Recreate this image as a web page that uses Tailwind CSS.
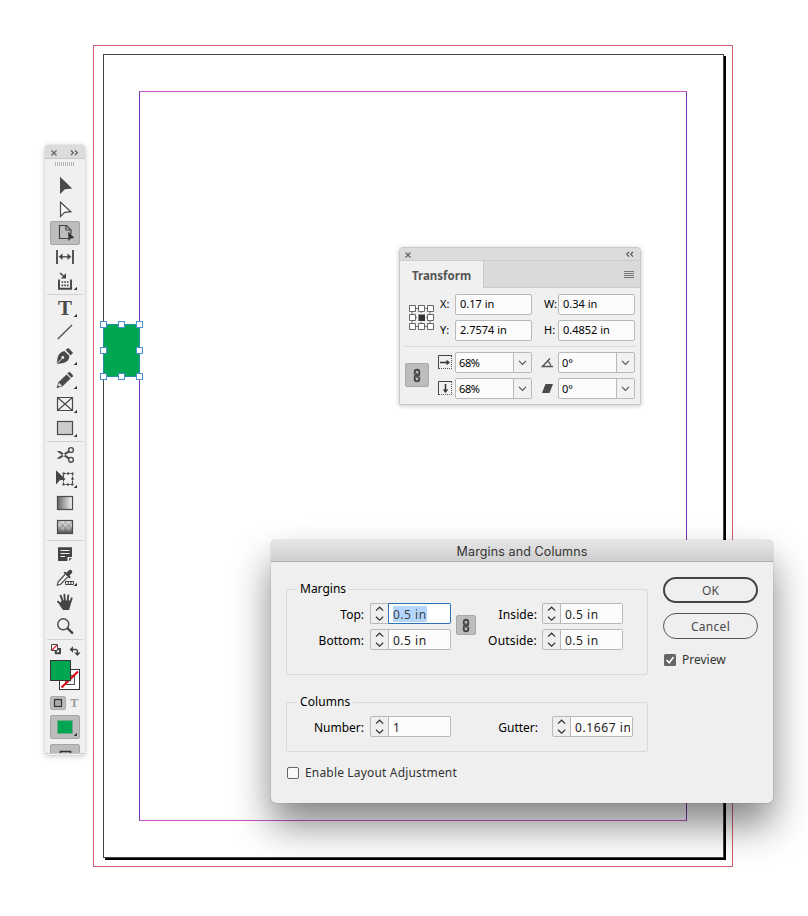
<!DOCTYPE html>
<html lang="en">
  <head>
    <meta charset="UTF-8" />
    <meta name="viewport" content="width=device-width, initial-scale=1.0" />
    <title>Margins and Columns</title>
    <script src="https://cdn.jsdelivr.net/npm/@tailwindcss/browser@4"></script>
  </head>
  <body class="relative w-[808px] h-[916px] overflow-hidden bg-white font-['Noto_Sans',sans-serif] text-black">
    <!-- Icons used more than once -->
    <svg class="hidden">
      <symbol id="corner" viewBox="0 0 4 4"><path d="M4 .7V4H.7z" fill="#333" /></symbol>
      <symbol id="chain" viewBox="0 0 10 16">
        <g fill="none" stroke="#444" stroke-width="2">
          <path d="M2.600 6.800V4.200a2.400 2.400 0 0 1 4.800 0v2a2.200 2.200 0 0 1-2.200 2.300v2" />
          <path d="M7.400 9.200v2.600a2.400 2.400 0 0 1-4.800 0v-2a2.200 2.200 0 0 1 2.200-2.300v-2" />
        </g>
      </symbol>
      <symbol id="steps" viewBox="0 0 17 19">
        <path d="M5 6.600 8.600 3.200l3.600 3.400M5 12.800l3.600 3.400 3.600-3.400" fill="none" stroke="#333" stroke-width="1.200" />
      </symbol>
      <symbol id="down" viewBox="0 0 17 19">
        <path d="M5 7.800l3.500 3.500L12 7.800" fill="none" stroke="#555" stroke-width="1.200" />
      </symbol>
    </svg>

    <!-- Document page: bleed, trim, margins -->
    <div class="absolute left-[93px] top-[45px] w-[640px] h-[822px] border border-[#d0606f] pl-[9px] pt-[8px]">
      <div class="w-[621px] h-[804px] border border-[#444] bg-white shadow-[2px_2px_0_#000] pl-[35px] pt-[36px]">
        <div class="w-[548px] h-[730px] border border-x-[#7f35b5] border-y-[#c455c9]"></div>
      </div>
    </div>

    <!-- Selected object -->
    <svg class="absolute left-[99px] top-[320px]" width="45" height="61" viewBox="0 0 45 61">
      <rect x="4.500" y="4.500" width="36" height="52" fill="#00a651" stroke="#2a8fa8" />
      <g fill="#fff" stroke="#4a90d0">
        <rect x="1.500" y="1.500" width="6" height="6" /><rect x="19.500" y="1.500" width="6" height="6" /><rect x="37.500" y="1.500" width="6" height="6" />
        <rect x="1.500" y="27.500" width="6" height="6" /><rect x="37.500" y="27.500" width="6" height="6" />
        <rect x="1.500" y="53.500" width="6" height="6" /><rect x="19.500" y="53.500" width="6" height="6" /><rect x="37.500" y="53.500" width="6" height="6" />
      </g>
    </svg>

    <!-- Tools panel -->
    <div class="absolute left-[45px] top-[145px] w-[40px] h-[610px] flex flex-col overflow-hidden rounded-t-[4px] bg-[#f0f0f0] shadow-[0_0_1px_rgba(0,0,0,0.3),0_1px_6px_rgba(0,0,0,0.22)]">
      <svg class="shrink-0" width="40" height="29" viewBox="0 0 40 29">
        <rect width="40" height="14" fill="#dcdcdc" />
        <path d="M0 13.500h40" stroke="#c8c8c8" />
        <path d="m6.500 5.500 5 5m0-5-5 5" stroke="#666" stroke-width="1.300" />
        <path d="m26 5.500 2.300 2.300L26 10.100m4-4.600 2.300 2.300L30 10.100" fill="none" stroke="#555" stroke-width="1.200" />
        <path d="M10.500 17v4m2-4v4m2-4v4m2-4v4m2-4v4m2-4v4m2-4v4m2-4v4m2-4v4m2-4v4" stroke="#b4b4b4" />
      </svg>
      <!-- selection -->
      <svg class="shrink-0" width="40" height="24"><path d="M15 2.700V20l5-4.700 7.200-.8z" fill="#4a4a4a" /></svg>
      <!-- direct selection -->
      <svg class="shrink-0" width="40" height="24"><path d="M15.500 4.200v14.300l4.100-4.200 6.300-.6z" fill="#fafafa" stroke="#4a4a4a" stroke-width="1.200" /></svg>
      <!-- page -->
      <svg class="shrink-0 overflow-visible" width="40" height="24">
        <rect x="5.500" y="-.5" width="29" height="23" rx="1.500" fill="#bdbdbd" stroke="#a5a5a5" />
        <path d="M23 16.500h-8.500v-13h7l4.500 4.500v4M21 3.500V8h5" fill="none" stroke="#444" stroke-width="1.200" />
        <path d="M23.300 9.500v9.700l2.500-2.700 3.500-.5z" fill="#333" />
      </svg>
      <!-- gap -->
      <svg class="shrink-0" width="40" height="24">
        <path d="M12 4v14M28 4v14" stroke="#444" stroke-width="1.800" />
        <path d="M15 10.800h10" stroke="#444" stroke-width="1.300" />
        <path d="m17.500 7.500-3.800 3.300 3.800 3.300zm5 0 3.800 3.300-3.800 3.300z" fill="#444" />
      </svg>
      <!-- content collector -->
      <svg class="shrink-0" width="40" height="24">
        <path d="M14 9.500v9.300h12V9.500" fill="none" stroke="#444" stroke-width="1.900" />
        <path d="M16.500 12h1.700m1 0h1.700m1 0h1.700m-7.100 3.300h1.700m1 0h1.700m1 0h1.700" stroke="#444" stroke-width="1.700" />
        <path d="m15 3 4 3.500" stroke="#444" stroke-width="1.600" /><path d="M21 3.300v5.200h-5.200z" fill="#444" />
        <use href="#corner" x="28" y="16" width="4" height="4" />
      </svg>
      <div class="shrink-0 h-[2px] mx-[2px] border-t border-[#d2d2d2]"></div>
      <!-- type -->
      <svg class="shrink-0" width="40" height="24">
        <text x="19.900" y="19" text-anchor="middle" class="font-['Liberation_Serif',serif] text-[21px] font-bold" fill="#4a4a4a">T</text>
        <use href="#corner" x="28" y="17" width="4" height="4" />
      </svg>
      <!-- line -->
      <svg class="shrink-0" width="40" height="24"><path d="M12.800 19 27 5" stroke="#555" stroke-width="1.400" /></svg>
      <!-- pen -->
      <svg class="shrink-0" width="40" height="24">
        <path d="m20.500 5.800 3-1.800 4.500 4.700-2.300 2.800z" fill="#4a4a4a" />
        <path d="m19.500 7 5 5c-.5 4-2.500 6-6 7l-6 1-.8-.8 1-6.200c1.300-3.500 3.300-5.500 6.800-6z" fill="#4a4a4a" />
        <path d="m11.800 19.800 5.200-5.300" stroke="#f0f0f0" stroke-width="1" /><circle cx="17.800" cy="13.500" r="1.400" fill="#f0f0f0" />
        <use href="#corner" x="28" y="17" width="4" height="4" />
      </svg>
      <!-- pencil -->
      <svg class="shrink-0" width="40" height="24">
        <path d="m22.300 5.500 1.600-1.500h1l3 3.200v1l-1.500 1.500z" fill="#4a4a4a" />
        <path d="m21.500 6.400 4.100 4.100-8 7.800-6 1.900 1.800-6z" fill="#4a4a4a" />
        <path d="m14 14.700 3.100 3-2.900.9-1.100-1.100z" fill="#e4e4e4" />
        <use href="#corner" x="28" y="17" width="4" height="4" />
      </svg>
      <!-- rectangle frame -->
      <svg class="shrink-0" width="40" height="24">
        <path d="M12.500 5.500h15v13h-15zl15 13m0-13-15 13" fill="none" stroke="#4a4a4a" stroke-width="1.200" />
        <use href="#corner" x="28" y="17" width="4" height="4" />
      </svg>
      <!-- rectangle -->
      <svg class="shrink-0" width="40" height="24">
        <rect x="12.500" y="5.500" width="15" height="13" fill="#ccc" stroke="#4a4a4a" stroke-width="1.200" />
        <use href="#corner" x="28" y="17" width="4" height="4" />
      </svg>
      <div class="shrink-0 h-[3px] pt-px mx-[2px]"><div class="border-t border-[#d2d2d2]"></div></div>
      <!-- scissors -->
      <svg class="shrink-0" width="40" height="24">
        <g fill="none" stroke="#4a4a4a" stroke-width="1.400"><circle cx="26" cy="7" r="2.400" /><circle cx="26" cy="16.800" r="2.400" /></g>
        <path d="m11.700 8.300 3.300-.3 9.300 6.500-1 1.700zM11.700 15.500l3.300.3 9.300-6.500-1-1.700z" fill="#4a4a4a" />
      </svg>
      <!-- free transform -->
      <svg class="shrink-0" width="40" height="24">
        <path d="M18.500 6.500h9v11h-9z" fill="none" stroke="#444" stroke-width="1.100" stroke-dasharray="3 1" />
        <path d="M17.500 5.500h2v2h-2zm4.500 0h2v2h-2zm4.500 0h2v2h-2zm0 5.500h2v2h-2zm-9 5.500h2v2h-2zm4.500 0h2v2h-2zm4.500 0h2v2h-2z" fill="#444" />
        <path d="M11 3.200v14.300l3.800-4.200 6-.8z" fill="#444" />
        <use href="#corner" x="28" y="17" width="4" height="4" />
      </svg>
      <!-- gradient -->
      <svg class="shrink-0" width="40" height="24">
        <linearGradient id="fade"><stop stop-color="#666" /><stop offset="1" stop-color="#f6f6f6" /></linearGradient>
        <rect x="12.500" y="5.500" width="15" height="13" fill="url(#fade)" stroke="#4a4a4a" stroke-width="1.200" />
      </svg>
      <!-- gradient feather -->
      <svg class="shrink-0" width="40" height="24">
        <linearGradient id="feather" x2="0" y2="1"><stop offset=".1" stop-color="#ddd" /><stop offset="1" stop-color="#555" /></linearGradient>
        <rect x="12.500" y="5.500" width="15" height="13" fill="url(#feather)" stroke="#4a4a4a" stroke-width="1.200" />
        <path d="M13 6h3v3h-3zm6 0h3v3h-3zm6 0h2v3h-2zm-9 3h3v3h-3zm6 0h3v3h-3z" fill="#888" fill-opacity=".3" />
        <path d="M13 9h3v3h-3zm6 0h3v3h-3zm6 0h2v3h-2zm-9 3h3v3h-3zm6 0h3v3h-3z" fill="#fff" fill-opacity=".25" />
      </svg>
      <div class="shrink-0 h-[3px] pt-px mx-[2px]"><div class="border-t border-[#d2d2d2]"></div></div>
      <!-- note -->
      <svg class="shrink-0" width="40" height="24">
        <path d="M13 5.300h14V15h-4.500v4H13zM24 16.300h3L24 19z" fill="#444" />
        <path d="M15.500 8.500h9m-9 3h9m-9 3h4.500" stroke="#f0f0f0" stroke-width="1.200" />
      </svg>
      <!-- eyedropper -->
      <svg class="shrink-0" width="40" height="24">
        <path d="m20 8.500-6.800 7.300-.9 3.400 3.300-1 7-7" fill="#f6f6f6" stroke="#4a4a4a" stroke-width="1.200" />
        <path d="m18.600 6.700 1.300-1.200 1.500 1.300 2.300-2.400c2-1.800 4.800.8 3 2.900l-2.300 2.300 1.400 1.500-1.300 1.300z" fill="#444" />
        <path d="M20.500 15.500h8v3h-8zm2.700 0v3m2.700-3v3" fill="#f0f0f0" stroke="#444" />
        <use href="#corner" x="28" y="16" width="4" height="4" />
      </svg>
      <!-- hand -->
      <svg class="shrink-0" width="40" height="24">
        <path d="m15.600 5.700 2.400 6M19.400 4.800l.5 6.500M23.300 5.400l-.6 6.300M26.700 8.300l-1.500 4.500M13.100 11.700l4 3.800" stroke="#444" stroke-width="1.900" stroke-linecap="round" />
        <path d="M16.600 10.500h9.300l-.4 5-1.500 4.500h-6l-3.500-5z" fill="#444" />
      </svg>
      <!-- zoom -->
      <svg class="shrink-0" width="40" height="24">
        <circle cx="18.300" cy="10.300" r="5.500" fill="none" stroke="#4a4a4a" stroke-width="1.400" />
        <path d="m22.800 14.500 4.400 4.400" stroke="#444" stroke-width="2.400" stroke-linecap="round" />
      </svg>
      <div class="shrink-0 h-[3px] pt-px mx-[2px]"><div class="border-t border-[#d2d2d2]"></div></div>
      <!-- fill and stroke, formatting target, apply colour, screen mode -->
      <svg class="shrink-0" width="40" height="113" viewBox="0 0 40 113">
        <path d="M10.800 8h4.200v4.200h-4.200z" fill="#fff" stroke="#444" stroke-width="2" />
        <path d="M6.500 3.500h6v6h-6z" fill="#fff" stroke="#444" /><path d="m7 9 5-5" stroke="#e0202a" stroke-width="1.200" />
        <path d="M27 8.500h3.500q2 0 2 2v2" fill="none" stroke="#444" stroke-width="1.300" />
        <path d="M28 5.300v6.400l-3.500-3.200zM29.200 11.500h6.400l-3.200 3.500z" fill="#444" />
        <rect x="14.500" y="28.500" width="20" height="20" fill="#fff" stroke="#333" />
        <rect x="20.500" y="34.500" width="9" height="9" fill="#f0f0f0" stroke="#555" />
        <path d="M16.500 46.500 33 30.500" stroke="#e00010" stroke-width="2" />
        <rect x="5.500" y="19.500" width="20" height="20" fill="#00a651" stroke="#333" />
        <rect x="5.500" y="55.500" width="15" height="13" rx="1.500" fill="#bdbdbd" stroke="#aaa" />
        <rect x="9.500" y="58.500" width="7" height="7" fill="#aaa" stroke="#333" stroke-width="1.200" />
        <text x="29.200" y="66" text-anchor="middle" class="font-['Liberation_Serif',serif] text-[12px] font-bold" fill="#999">T</text>
        <rect x="5.500" y="74.500" width="29" height="23" rx="1.500" fill="#bdbdbd" stroke="#a5a5a5" />
        <rect x="12.500" y="79.500" width="15" height="13" fill="#00a651" stroke="#77a589" />
        <use href="#corner" x="28" y="91" width="4" height="4" />
        <rect x="5.500" y="103.500" width="29" height="20" rx="1.500" fill="#bdbdbd" stroke="#a5a5a5" />
        <path d="M15.500 113v-2.500h10v2.500" fill="none" stroke="#333" stroke-width="1.600" />
        <path d="M0 112.500h40" stroke="#ccc" />
      </svg>
    </div>

    <!-- Transform panel -->
    <div class="absolute left-[399px] top-[247px] w-[242px] h-[158px] flex flex-col rounded-t-[4px] border border-[#c8c8c8] bg-[#f0f0f0] text-[11px] shadow-[0_1px_5px_rgba(0,0,0,0.22)]">
      <div class="h-[13px] shrink-0 flex items-center justify-between px-[4px] rounded-t-[3px] bg-[#dcdcdc] border-b border-[#cbcbcb]">
        <svg width="9" height="9"><path d="m1.500 2.500 5 5m0-5-5 5" stroke="#666" stroke-width="1.300" /></svg>
        <svg width="11" height="9"><path d="M4 2 1.700 4.300 4 6.600M8 2 5.700 4.300 8 6.600" fill="none" stroke="#555" stroke-width="1.200" /></svg>
      </div>
      <div class="h-[27px] shrink-0 flex">
        <div class="w-[84px] pl-[12px] pt-[2px] leading-[25px] font-bold text-[11.500px] text-[#555] border-r border-[#cbcbcb]">Transform</div>
        <div class="flex-1 flex justify-end items-center pr-[6px] bg-[#dadada] border-b border-[#cbcbcb]">
          <svg width="10" height="9"><path d="M0 1.500h10M0 3.500h10M0 5.500h10M0 7.500h10" stroke="#777" /></svg>
        </div>
      </div>
      <div class="mx-[5px] h-[59px] shrink-0 flex border-b border-[#d8d8d8] pt-[6px]">
        <svg class="ml-[3px] mt-[10px]" width="27" height="27">
          <path d="M4 4.500h18v18H4zm9 0v18M4 13.500h18" fill="none" stroke="#777" />
          <g fill="#fff" stroke="#666">
            <path d="M1.500 1.500h6v6h-6zm9 0h6v6h-6zm9 0h6v6h-6zM1.500 10.500h6v6h-6zm18 0h6v6h-6zM1.500 19.500h6v6h-6zm9 0h6v6h-6zm9 0h6v6h-6z" />
          </g>
          <rect x="9" y="9" width="9" height="9" fill="#f0f0f0" /><rect x="10.500" y="10.500" width="6.500" height="6.500" fill="#333" />
        </svg>
        <div class="ml-[5px] grid grid-cols-[15px_77px_26px_77px] auto-rows-[21px] gap-y-[5px] items-center">
          <span>X:</span>
          <div class="h-[21px] leading-[18px] pl-[4px] rounded-[2px] border border-[#b9b9b9] bg-[#fbfbfb]">0.17 in</div>
          <span class="pl-[12px] tracking-[-0.3px]">W:</span>
          <div class="h-[21px] leading-[18px] pl-[4px] rounded-[2px] border border-[#b9b9b9] bg-[#fbfbfb]">0.34 in</div>
          <span>Y:</span>
          <div class="h-[21px] leading-[18px] pl-[4px] rounded-[2px] border border-[#b9b9b9] bg-[#fbfbfb]">2.7574 in</div>
          <span class="pl-[12px]">H:</span>
          <div class="h-[21px] leading-[18px] pl-[4px] rounded-[2px] border border-[#b9b9b9] bg-[#fbfbfb]">0.4852 in</div>
        </div>
      </div>
      <div class="mx-[5px] flex pt-[5px]">
        <div class="mt-[11px] w-[24px] h-[24px] flex items-center justify-center rounded-[2px] border border-[#a8a8a8] bg-[#bdbdbd]">
          <svg width="10" height="15"><use href="#chain" /></svg>
        </div>
        <div class="ml-[9px] grid grid-cols-[17px_77px_26px_77px] auto-rows-[21px] gap-y-[5px] items-center">
          <svg width="15" height="15">
            <path d="M13.500 1v13M1 13.500h13" fill="none" stroke="#555" stroke-dasharray="1 1" /><path d="M.5 14V.5H14" fill="none" stroke="#444" />
            <path d="M2 7.500h8" stroke="#333" stroke-width="1.500" /><path d="m8.500 4.700 3.500 2.800-3.500 2.800z" fill="#333" />
          </svg>
          <div class="h-[21px] flex rounded-[2px] border border-[#b9b9b9] bg-[#fbfbfb]">
            <span class="flex-1 pl-[3px] leading-[20px] tracking-[-0.4px]">68%</span>
            <svg class="border-l border-[#b9b9b9] bg-[#f2f2f2]" width="18" height="19"><use href="#down" /></svg>
          </div>
          <svg class="ml-[9px]" width="13" height="12"><path d="M12 9.500H1.500l7.500-8M7 4.500q3 2 2.700 5" fill="none" stroke="#555" stroke-width="1.400" /></svg>
          <div class="h-[21px] flex rounded-[2px] border border-[#b9b9b9] bg-[#fbfbfb]">
            <span class="flex-1 pl-[3px] leading-[20px]">0°</span>
            <svg class="border-l border-[#b9b9b9] bg-[#f2f2f2]" width="18" height="19"><use href="#down" /></svg>
          </div>
          <svg width="15" height="15">
            <path d="M13.500 1v13M1 13.500h13" fill="none" stroke="#555" stroke-dasharray="1 1" /><path d="M.5 14V.5H14" fill="none" stroke="#444" />
            <path d="M7.500 3v7" stroke="#333" stroke-width="1.500" /><path d="M4.700 8.500h5.600L7.500 12z" fill="#333" />
          </svg>
          <div class="h-[21px] flex rounded-[2px] border border-[#b9b9b9] bg-[#fbfbfb]">
            <span class="flex-1 pl-[3px] leading-[20px] tracking-[-0.4px]">68%</span>
            <svg class="border-l border-[#b9b9b9] bg-[#f2f2f2]" width="18" height="19"><use href="#down" /></svg>
          </div>
          <svg class="ml-[9px]" width="13" height="11"><path d="M4.500 1h7.500l-3.500 9H1z" fill="#4a4a4a" /></svg>
          <div class="h-[21px] flex rounded-[2px] border border-[#b9b9b9] bg-[#fbfbfb]">
            <span class="flex-1 pl-[3px] leading-[20px]">0°</span>
            <svg class="border-l border-[#b9b9b9] bg-[#f2f2f2]" width="18" height="19"><use href="#down" /></svg>
          </div>
        </div>
      </div>
    </div>

    <!-- Margins and Columns dialog -->
    <div class="absolute left-[271px] top-[540px] w-[502px] h-[263px] rounded-[5px] bg-[#efefef] text-[12px] shadow-[0_0_1px_rgba(0,0,0,0.5),0_22px_38px_rgba(0,0,0,0.48)]">
      <div class="h-[22px] text-center leading-[23px] rounded-t-[5px] border-b border-[#b0b0b0] bg-linear-to-b from-[#e6e6e6] to-[#cfcfcf] font-['Inter',sans-serif] text-[12.500px] tracking-[0.12px] text-[#333]">Margins and Columns</div>
      <div class="flex">
        <div class="pl-[15px] pt-[18px] w-[377px]">
          <fieldset class="h-[95px] px-[10px] rounded-[2px] border border-[#dadada]">
            <legend class="px-[3px] h-[18px] leading-[18px]">Margins</legend>
            <div class="flex pt-[5px]">
              <div class="grid grid-cols-[67px_81px] auto-rows-[21px] gap-x-[6px] gap-y-[5px]">
                <span class="text-right leading-[23px]">Top:</span>
                <div class="flex rounded-[2px] border border-[#b9b9b9] border-r-0">
                  <svg width="17" height="19"><use href="#steps" /></svg>
                  <div class="flex-1 -my-px pl-[4px] pt-[2px] rounded-r-[2px] border border-[#2a73b8] bg-white"><span class="block w-[34px] h-[16px] leading-[17px] tracking-[0.5px] bg-[#b3d7ff] text-[#444]">0.5 in</span></div>
                </div>
                <span class="text-right leading-[23px]">Bottom:</span>
                <div class="flex rounded-[2px] border border-[#b9b9b9]">
                  <svg width="17" height="19"><use href="#steps" /></svg>
                  <div class="flex-1 pl-[4px] leading-[21px] tracking-[0.5px] border-l border-[#b9b9b9] bg-[#fcfcfc] text-[#222]">0.5 in</div>
                </div>
              </div>
              <div class="ml-[5px] mt-[12px] w-[20px] h-[20px] flex items-center justify-center rounded-[2px] border border-[#a8a8a8] bg-[#bdbdbd]">
                <svg width="10" height="15"><use href="#chain" /></svg>
              </div>
              <div class="grid grid-cols-[61px_81px] auto-rows-[21px] gap-x-[5px] gap-y-[5px]">
                <span class="-ml-2 text-right leading-[23px] tracking-[0.1px]">Inside:</span>
                <div class="flex rounded-[2px] border border-[#b9b9b9]">
                  <svg width="17" height="19"><use href="#steps" /></svg>
                  <div class="flex-1 pl-[4px] leading-[21px] tracking-[0.5px] border-l border-[#b9b9b9] bg-[#fcfcfc] text-[#222]">0.5 in</div>
                </div>
                <span class="-ml-2 text-right leading-[23px] tracking-[0.2px]">Outside:</span>
                <div class="flex rounded-[2px] border border-[#b9b9b9]">
                  <svg width="17" height="19"><use href="#steps" /></svg>
                  <div class="flex-1 pl-[4px] leading-[21px] tracking-[0.5px] border-l border-[#b9b9b9] bg-[#fcfcfc] text-[#222]">0.5 in</div>
                </div>
              </div>
            </div>
          </fieldset>
          <fieldset class="mt-[18px] h-[59px] px-[10px] rounded-[2px] border border-[#dadada]">
            <legend class="px-[3px] h-[18px] leading-[18px] tracking-[0.1px]">Columns</legend>
            <div class="flex pt-[5px]">
              <span class="w-[67px] text-right leading-[23px]">Number:</span>
              <div class="ml-[6px] w-[81px] h-[21px] flex rounded-[2px] border border-[#b9b9b9]">
                <svg width="17" height="19"><use href="#steps" /></svg>
                <div class="flex-1 pl-[4px] leading-[21px] border-l border-[#b9b9b9] bg-[#fcfcfc] text-[#222]">1</div>
              </div>
              <span class="w-[87px] text-right leading-[23px]">Gutter:</span>
              <div class="ml-[14px] w-[81px] h-[21px] flex rounded-[2px] border border-[#b9b9b9]">
                <svg class="shrink-0" width="17" height="19"><use href="#steps" /></svg>
                <div class="flex-1 min-w-0 pl-[4px] pr-[2px] leading-[21px] tracking-[0.6px] border-l border-[#b9b9b9] bg-[#fcfcfc] text-[#222]"><div class="overflow-hidden whitespace-nowrap">0.1667 in</div></div>
              </div>
            </div>
          </fieldset>
          <div class="mt-[12px] pl-[1px] flex items-center text-[#333]">
            <span class="w-[12px] h-[12px] rounded-[2px] border border-[#666] bg-[#f8f8f8]"></span>
            <span class="ml-[6px] leading-[18px] tracking-[0.17px]">Enable Layout Adjustment</span>
          </div>
        </div>
        <div class="pl-[15px] pt-[15px] text-[#4a4a4a]">
          <div class="w-[95px] h-[26px] rounded-full border-2 border-[#444] text-center leading-[23px]">OK</div>
          <div class="mt-[10px] w-[95px] h-[26px] rounded-full border border-[#555] text-center leading-[25px] tracking-[0.3px]">Cancel</div>
          <div class="mt-[12px] pl-[1px] flex items-center text-[#333]">
            <svg width="12" height="12"><rect width="12" height="12" rx="1.500" fill="#666" /><path d="m2.500 6 2.700 2.700L9.500 3" fill="none" stroke="#fff" stroke-width="1.600" /></svg>
            <span class="ml-[6px] leading-[18px]">Preview</span>
          </div>
        </div>
      </div>
    </div>
  </body>
</html>
